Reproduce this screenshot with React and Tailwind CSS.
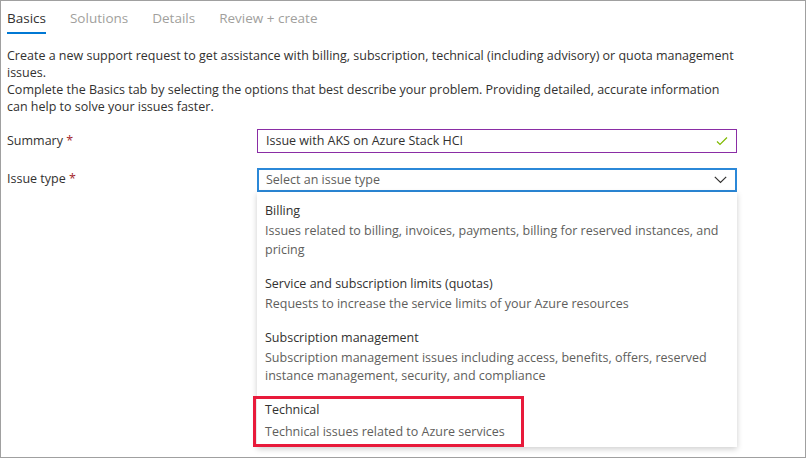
import React from 'react';

const font = { fontFamily: '"Open Sans", "Noto Sans", sans-serif' };

const tabs = ['Basics', 'Solutions', 'Details', 'Review + create'];

const options = [
  {
    title: 'Billing',
    desc: 'Issues related to billing, invoices, payments, billing for reserved instances, and pricing',
  },
  {
    title: 'Service and subscription limits (quotas)',
    desc: 'Requests to increase the service limits of your Azure resources',
  },
  {
    title: 'Subscription management',
    desc: 'Subscription management issues including access, benefits, offers, reserved instance management, security, and compliance',
  },
  {
    title: 'Technical',
    desc: 'Technical issues related to Azure services',
    highlight: true,
  },
];

function App() {
  return (
    <div
      className="w-[806px] h-[458px] bg-white border border-[#a0a0a0] overflow-hidden text-[12.5px] text-[#323130]"
      style={font}
    >
      <div className="flex gap-[24px] pl-[6px] pt-[6px]">
        {tabs.map((t, i) => (
          <div
            key={t}
            className={
              i === 0
                ? 'h-[27px] border-b-2 border-[#0078d4] text-[#323130] text-[13.5px] leading-[22px]'
                : 'h-[27px] text-[#a19f9d] text-[13.5px] leading-[22px]'
            }
          >
            {t}
          </div>
        ))}
      </div>

      <div className="pl-[6px] pr-[64px] pt-[13px] leading-[17px]">
        <p>
          Create a new support request to get assistance with billing, subscription, technical (including advisory) or
          quota management issues.
        </p>
        <p>
          Complete the Basics tab by selecting the options that best describe your problem. Providing detailed, accurate
          information can help to solve your issues faster.
        </p>
      </div>

      <div className="mt-[14px] flex items-center">
        <div className="w-[256px] pl-[6px]">
          Summary <span className="text-[#a4262c]">*</span>
        </div>
        <div className="w-[480px] h-[24px] border border-[#8a2da5] flex items-center justify-between pl-[8px] pr-[8px]">
          <span>Issue with AKS on Azure Stack HCI</span>
          <svg width="12" height="10" viewBox="0 0 12 10" fill="none">
            <path d="M1 5.5 L4 8.5 L11 1.5" stroke="#7fba00" strokeWidth="1.2" />
          </svg>
        </div>
      </div>

      <div className="mt-[15px] flex items-start">
        <div className="w-[256px] pl-[6px] pt-[2px]">
          Issue type <span className="text-[#a4262c]">*</span>
        </div>
        <div className="relative w-[480px]">
          <div className="h-[24px] border-2 border-[#2b88d8] flex items-center justify-between pl-[7px] pr-[8px] text-[#605e5c]">
            <span>Select an issue type</span>
            <svg width="13" height="8" viewBox="0 0 13 8" fill="none">
              <path d="M0.8 0.8 L6.5 6.5 L12.2 0.8" stroke="#323130" strokeWidth="1.2" />
            </svg>
          </div>
          <div className="absolute left-0 top-[24px] w-[480px] bg-white shadow-[0_2px_6px_rgba(0,0,0,0.2)] pt-[10px]">
            {options.map((o) => (
              <div
                key={o.title}
                className={
                  o.highlight
                    ? 'mt-[-5px] ml-[-4px] w-[271px] border-[3px] border-[#e81a3b] pl-[9px] pt-[2px] pb-[2px]'
                    : 'px-[8px] pb-[15.5px]'
                }
              >
                <div className="leading-[18px] text-[#323130]">{o.title}</div>
                <div
                  className={
                    o.highlight
                      ? 'mt-[4px] leading-[18.5px] text-[#605e5c] pr-[6px]'
                      : 'mt-[2px] leading-[18.5px] text-[#605e5c] pr-[6px]'
                  }
                >
                  {o.desc}
                </div>
              </div>
            ))}
          </div>
        </div>
      </div>
    </div>
  );
}

export default App;
